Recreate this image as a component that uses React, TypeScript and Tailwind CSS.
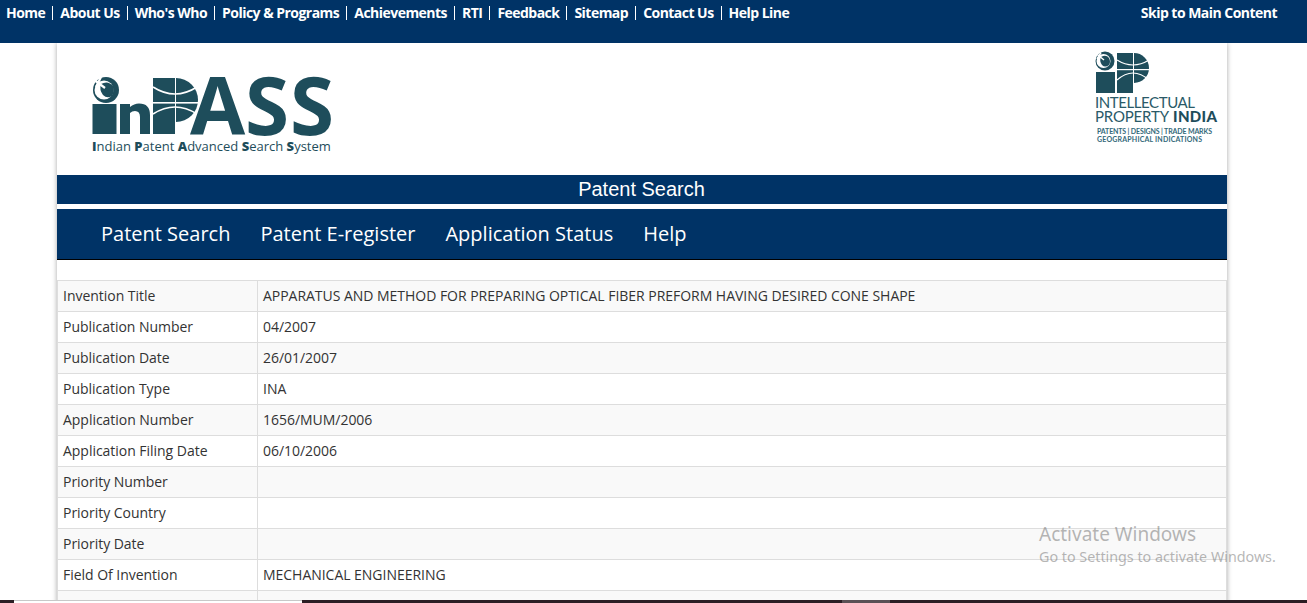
const topLinks = [
  "Home",
  "About Us",
  "Who's Who",
  "Policy & Programs",
  "Achievements",
  "RTI",
  "Feedback",
  "Sitemap",
  "Contact Us",
  "Help Line",
];

const menuLinks = ["Patent Search", "Patent E-register", "Application Status", "Help"];

const rows = [
  ["Invention Title", "APPARATUS AND METHOD FOR PREPARING OPTICAL FIBER PREFORM HAVING DESIRED CONE SHAPE"],
  ["Publication Number", "04/2007"],
  ["Publication Date", "26/01/2007"],
  ["Publication Type", "INA"],
  ["Application Number", "1656/MUM/2006"],
  ["Application Filing Date", "06/10/2006"],
  ["Priority Number", ""],
  ["Priority Country", ""],
  ["Priority Date", ""],
  ["Field Of Invention", "MECHANICAL ENGINEERING"],
  ["", ""],
];

const teal = "#1e4d5b";

const InpassLogo = () => (
  <svg width="270" height="82" viewBox="0 0 270 82" className="block">
    {/* globe */}
    <circle cx="14" cy="14" r="13" fill={teal} />
    <circle cx="12" cy="14" r="9.5" fill="#fff" />
    <path d="M9 8 Q16 4 21 10 Q23 15 20 20 Q15 23 11 19 Q7 14 9 8 Z" fill={teal} />
    <path d="M1 3 L13 12 M9 1 L4 11" stroke="#fff" strokeWidth="2.2" fill="none" />
    <rect x="0.5" y="28" width="24" height="30" fill={teal} />
    <path d="M28 58 V28 H38 V31 Q42 27.5 47 27.5 Q58 27.5 58 39 V58 H48 V41 Q48 35 43 35 Q40 35 38 37 V58 Z" fill={teal} />
    {/* P mark */}
    <rect x="61" y="2" width="22" height="56" fill={teal} />
    <path d="M84 2 A22 22 0 0 1 84 46 Z" fill={teal} />
    <rect x="61" y="26" width="45" height="1.6" fill="#fff" />
    <path d="M61 11 Q83 25 105 11" stroke="#fff" strokeWidth="1.6" fill="none" />
    <path d="M61 38 Q83 24 105 38" stroke="#fff" strokeWidth="1.6" fill="none" />
    <text
      x="98 153 198"
      y="59"
      fontFamily="'Open Sans', sans-serif"
      fontWeight="700"
      fontSize="80"
      fill={teal}
    >
      ASS
    </text>
    <text x="0" y="75" fontFamily="'Open Sans', sans-serif" fontWeight="500" fontSize="13" fill={teal}>
      <tspan fontWeight="800">I</tspan>ndian <tspan fontWeight="800">P</tspan>atent{" "}
      <tspan fontWeight="800">A</tspan>dvanced <tspan fontWeight="800">S</tspan>earch{" "}
      <tspan fontWeight="800">S</tspan>ystem
    </text>
  </svg>
);

const IpIndiaLogo = () => (
  <svg width="124" height="94" viewBox="0 0 124 94" className="block">
    {/* globe */}
    <circle cx="11" cy="10" r="9.5" fill={teal} />
    <circle cx="9.5" cy="10" r="7" fill="#fff" />
    <path d="M7 6 Q12 3 15 7 Q17 11 15 14 Q11 17 8 14 Q5 10 7 6 Z" fill={teal} />
    <path d="M2 2.5 L10 9 M7 1.5 L3 8" stroke="#fff" strokeWidth="1.5" fill="none" />
    <rect x="2" y="21" width="19" height="21" fill={teal} />
    <rect x="23" y="2" width="16" height="40" fill={teal} />
    <path d="M40 2 A15 15 0 0 1 40 32 Z" fill={teal} />
    <rect x="23" y="18" width="32" height="1.2" fill="#fff" />
    <path d="M23 9 Q39 19 55 9" stroke="#fff" strokeWidth="1.1" fill="none" />
    <path d="M23 29 Q39 15 55 29" stroke="#fff" strokeWidth="1.1" fill="none" />
    <g fontFamily="'Lato', sans-serif" fill="#2a5a68">
      <text x="1" y="56.5" fontSize="15" fontWeight="400" textLength="100">INTELLECTUAL</text>
      <text x="1" y="71" fontSize="15" fontWeight="400" textLength="74">PROPERTY</text>
      <text x="79" y="71" fontSize="15" fontWeight="900" fill={teal} textLength="44">INDIA</text>
      <text x="3" y="83" fontSize="7" fontWeight="700" fill="#33697a" textLength="115">PATENTS | DESIGNS | TRADE MARKS</text>
      <text x="3" y="90.5" fontSize="7" fontWeight="700" fill="#33697a" textLength="105">GEOGRAPHICAL INDICATIONS</text>
    </g>
  </svg>
);

const App = () => {
  return (
    <div className="relative h-[603px] overflow-hidden bg-white font-['Open_Sans',sans-serif] text-sm text-[#333]">
      <header className="relative z-10 flex h-[43px] items-start justify-between bg-[#003366] pl-[6px] pr-[30px] pt-[5px] font-bold tracking-[-0.53px] text-white">
        <ul className="flex">
          {topLinks.map((link, i) => (
            <li key={link} className="flex items-center">
              <a className="leading-[16px]">{link}</a>
              {i < topLinks.length - 1 && <span className="mx-[7px] h-[14px] w-px bg-white"></span>}
            </li>
          ))}
        </ul>
        <a className="leading-[16px]">Skip to Main Content</a>
      </header>

      <main className="mx-[57px] w-[1170px] shadow-[0_0_5px_rgba(0,0,0,0.35)]">
        <div className="flex h-[132px] justify-between pl-[35px] pr-[9px]">
          <div className="pt-[33px]">
            <InpassLogo />
          </div>
          <div className="pt-[8px]">
            <IpIndiaLogo />
          </div>
        </div>

        <h1 className="h-[29px] bg-[#003366] pr-[1px] text-center font-['Liberation_Sans',sans-serif] text-[20px] leading-[29px] text-white">
          Patent Search
        </h1>

        <nav className="mt-[5px] flex h-[51px] gap-[30px] border-b border-black bg-[#003366] pl-[44px] text-[20px] leading-[50px] text-white">
          {menuLinks.map((link) => (
            <a key={link}>{link}</a>
          ))}
        </nav>

        <table className="mt-[20px] w-full table-fixed border-collapse tracking-[-0.03px]">
          <colgroup>
            <col className="w-[200px]" />
            <col />
          </colgroup>
          <tbody>
            {rows.map(([label, value], i) => (
              <tr key={i} className={i % 2 === 0 ? "h-[31px] bg-[#f9f9f9]" : "h-[31px] bg-white"}>
                <td className="border border-[#dddddd] px-[5px] py-0 leading-[20px]">{label}</td>
                <td className="border border-[#dddddd] px-[5px] py-0 leading-[20px]">{value}</td>
              </tr>
            ))}
          </tbody>
        </table>
      </main>

      <div className="absolute left-[1039px] top-[522px] z-20 font-['Noto_Sans',sans-serif] text-[rgba(110,110,110,0.5)]">
        <p className="text-[19px] leading-[24px]">Activate Windows</p>
        <p className="mt-[1px] text-[14.3px] leading-[20px]">Go to Settings to activate Windows.</p>
      </div>

      {/* taskbar sliver at the bottom edge */}
      <div className="absolute bottom-0 left-0 z-30 flex h-[3px] w-full bg-[#2b1e24]">
        <div className="ml-[14px] w-[288px] border-t border-[#c8c8c8] bg-white"></div>
        <div className="ml-[540px] w-[48px] bg-[#5a5055]"></div>
      </div>
    </div>
  );
};

export default App;
